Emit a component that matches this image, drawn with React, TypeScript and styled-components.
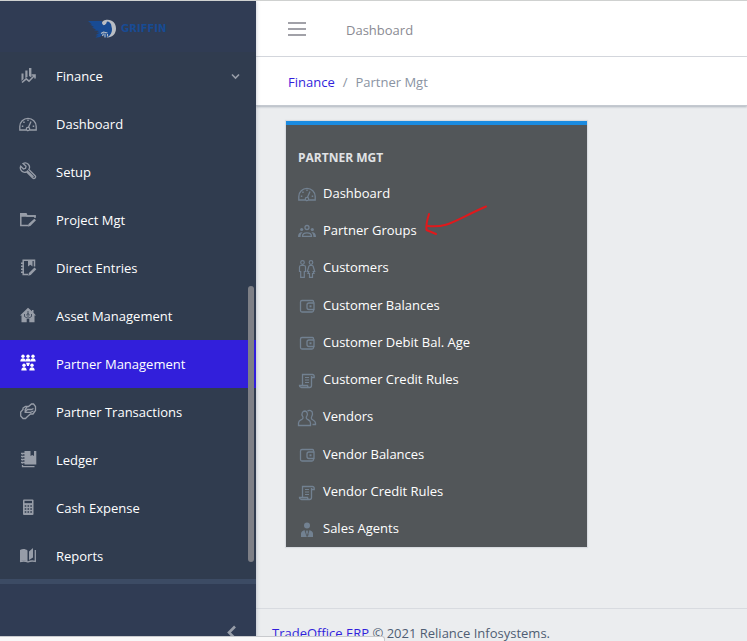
import React from "react";
import styled, { createGlobalStyle } from "styled-components";

const Global = createGlobalStyle`
  *, *::before, *::after { box-sizing: border-box; }
  body {
    margin: 0;
    background: #ebedef;
    color: #4f5d73;
    font-family: "Open Sans", "Noto Sans", sans-serif;
    font-size: 13px;
    line-height: 20px;
  }
  a { text-decoration: none; }
  ul, ol { list-style: none; margin: 0; padding: 0; }
`;

/* ---------- icons ---------- */

const IconSvg = styled.svg`
  flex: none;
  width: 20px;
  height: 20px;
  fill: none;
  stroke: currentColor;
  stroke-width: 1.3;
  .solid { fill: currentColor; stroke: none; }
  .thin { stroke-width: 1; }
`;

const wallet = (
  <>
    <path d="M16.500 6.500V5.500a1 1 0 0 0-1-1H5a1.500 1.500 0 0 0-1.500 1.500V14.500a1.500 1.500 0 0 0 1.500 1.500H15a1.500 1.500 0 0 0 1.500-1.500V13.500" />
    <path d="M17 7H12a2 2 0 0 0-2 2v2.500a2 2 0 0 0 2 2H17z" />
    <path className="solid" d="M12.500 9.300h2v2h-2z" />
  </>
);

const scroll = (
  <>
    <path d="M5.500 14V3.500H15.500a1.700 1.700 0 0 1 1.700 1.700V6.500H14.500M14.500 5V14.500a2 2 0 0 1-2 2H4.500a2 2 0 0 1-2-2H10.500a2 2 0 0 0 2 2" />
    <path className="thin" d="M8 6.500h4M8 9h4M8 11.500h4" />
  </>
);

const icons: Record<string, React.ReactNode> = {
  finance: (
    <>
      <path className="solid" d="M3.500 7.500h2V13l-2 2zM7.300 4.500h2.200V11l-2.200 1zM11 2h2.400v9.500L11 10z" />
      <path strokeWidth="1.600" d="M4 16.500 8.200 12.800 11 15.200 16.500 9.500M13.500 9h3.500v3.500" />
    </>
  ),
  gauge: (
    <>
      <path d="M8 16H1.800V12.500a8.200 8.200 0 0 1 16.400 0V16H12" />
      <circle cx="10" cy="15" r="1.700" />
      <path d="M10.500 13.300 13 7.500" />
      <path className="solid" d="M9.300 5.500h1.400v1.600H9.300zM5.200 7.500h1.500V9H5.200zM3.800 11.500h1.500V13H3.800zM14.700 11.500h1.500V13h-1.500z" />
    </>
  ),
  wrench: (
    <path d="M5 1.500 8 4.300 7.500 6.300 5.500 7 2.700 4.200a4.300 4.300 0 0 0 5.800 5.600l6.200 6.300a1.700 1.700 0 0 0 2.400-2.400l-6.300-6.200A4.300 4.300 0 0 0 5 1.500zM9 8.500l6.500 6.500" />
  ),
  folder: (
    <>
      <path strokeWidth="1.500" d="M10.500 15.500H2.800V4.500H8l1 1.500H17V8" />
      <path className="solid" d="M2 3h6.500L9.500 5.200H17.800V6.700H2zM16.300 8.700l1.700 1.600-5.700 5.700-2.300.6.500-2.500z" />
    </>
  ),
  notebook: (
    <>
      <path strokeWidth="1.500" d="M10 16.500H5.200V2.300H16.500V8.500" />
      <path className="solid" d="M10 2.500h4.500v6L12.300 6.800 10 8.500zM16.500 9.500l1.800 1.800-5.600 5.700-2.500.8.700-2.700zM3 4.500h3V6H3zM3 7.500h3V9H3zM3 10.500h3V12H3zM3 13.500h3V15H3z" />
    </>
  ),
  house: (
    <>
      <path className="solid" d="M10 1.800 14 5.300V4h1.500v2.700L18 9.500h-1.500v6.700h-5.200V13H8.700v3.200H3.500V9.500H2z" />
      <path
        d="M10 5v8M10 7.500 8.200 9.200M10 7.500l1.800 1.700M6.500 8v2.500L9 12M13.500 8v2.500L11 12"
        stroke="#303c4f"
        strokeWidth="0.800"
      />
    </>
  ),
  people: (
    <g className="solid">
      {[[5, 1.5], [10, 1.5], [15, 1.5], [6, 10.5], [14, 10.5]].map(([x, y]) => (
        <g key={`${x}-${y}`}>
          <circle cx={x} cy={y + 0.8} r="1.700" />
          <path d={`M${x - 2.7} ${y + 6}c0-4.200 5.400-4.200 5.400 0z`} />
        </g>
      ))}
      <path d="M8 8.800h4L10.800 12H9.200z" />
    </g>
  ),
  exchange: (
    <>
      <path d="M7.500 4.500h3L13.500 2h2L17.500 4.500v4l-2.500 3.500h-2.500l-3 2.500-2 2H5L2.700 14V10L5 7.500V6z" />
      <path d="M15.500 6.500 13.500 7.500H9.500L7.500 9.500M9 5 7.200 7.500V10.300H12.500L15.500 9" />
    </>
  ),
  ledger: (
    <>
      <path className="solid" d="M6.500 1H12.500v5l1.700-1L16 6V1h2.300V14.500H6.500z" />
      <path d="M4.500 15v1.700H16.500M3 3.500h4M3 6.500h4M3 9.500h4M3 12.500h4" />
      <path className="thin" d="M4.500 3v12" strokeDasharray="1.500 1.500" />
    </>
  ),
  calculator: (
    <>
      <rect className="solid" x="5" y="1.500" width="10.500" height="15.500" rx="1" />
      <path d="M6.500 4h7.500" stroke="#303c4f" strokeWidth="2.300" />
      <path
        d="M6.700 8h7.500M6.700 11h7.500M6.700 14h7.500"
        stroke="#303c4f"
        strokeWidth="1.400"
        strokeDasharray="1.600 1.200"
      />
    </>
  ),
  book: (
    <>
      <path className="solid" d="M2 4C5 2.500 7.500 3 9.500 4.500v11C7 14.300 4.500 14.300 2 15.500zM11 5.500 15 2v9.500l-4 2.500z" />
      <path d="M2 15.500c3-.8 5.500-.8 8 .5 2.500-1.300 4.500-1.300 7.300-.5V4" />
    </>
  ),
  group: (
    <>
      <circle cx="10" cy="6.500" r="2" />
      <path d="M5.500 15.300c0-4.500 9-4.500 9 0z" />
      <circle className="solid" cx="4.700" cy="8.500" r="1.600" />
      <circle className="solid" cx="15.300" cy="8.500" r="1.600" />
      <path className="solid" d="M1 15.900c0-3.500 1.500-5 4.600-4.700-1.500 1.400-2 2.700-2 4.700zM19 15.900c0-3.500-1.500-5-4.600-4.700 1.500 1.400 2 2.700 2 4.700z" />
    </>
  ),
  couple: (
    <g strokeWidth="1.200">
      <circle cx="5.500" cy="3.500" r="1.800" />
      <circle cx="14" cy="3.500" r="1.800" />
      <path d="M4 6.500h3q1.500 0 1.500 1.500v4.500H7.300V18.300H3.700V12.500H2.500V8Q2.500 6.500 4 6.500zM13 6.500h2q1 0 1.200 1l1.500 5h-1.500l.8 2h-1.500v3.800h-3V14.500H11l.8-2h-1.500l1.500-5q.2-1 1.200-1z" />
    </g>
  ),
  wallet,
  scroll,
  users: (
    <>
      <path d="M8 3a3 3.300 0 0 0-2.500 5.200c.8 1 .7 2.300-.5 3C3 12.300 1.500 12.800 1.500 15v2.500h12V15c0-2.200-1.500-2.700-3.200-3.800-1.200-.7-1.300-2-.5-3A3 3.300 0 0 0 8 3z" />
      <path d="M10.500 3.200C12 1.500 15.800 2.500 15.500 6c0 2-1.800 3-1 4.700.5 1.300 4 1.800 4 4.300v1.500h-3" />
    </>
  ),
  agent: (
    <>
      <circle className="solid" cx="10" cy="5.500" r="3" />
      <path className="solid" d="M4 17v-3.500C4 11.500 6 10.500 8 10.300L10 17zM16 17v-3.500c0-2-2-3-4-3.200L10 17zM9.300 10.500h1.400L11.500 15 10 17l-1.500-2z" />
      <path d="m8 10.500 2 6 2-6" stroke="#525659" strokeWidth="0.800" />
    </>
  ),
};

const Icon = ({ name }: { name: string }) => (
  <IconSvg viewBox="0 0 20 20" aria-hidden="true">{icons[name]}</IconSvg>
);

/* ---------- page frame ---------- */

const Page = styled.div`
  display: grid;
  grid-template-columns: 256px minmax(0, 1fr);
  height: 100vh;
  min-height: 600px;
  border-top: 1px solid #cfd1d0;
  overflow: hidden;
`;

const Sidebar = styled.aside`
  position: relative;
  z-index: 1;
  display: flex;
  flex-direction: column;
  min-height: 0;
  background: #303c4f;
  box-shadow: 0 0 4px rgba(60, 75, 100, 0.35);
`;

const Brand = styled.a`
  display: flex;
  flex: none;
  align-items: center;
  gap: 4px;
  height: 51px;
  padding: 5px 0 0 88px;
  background: #303c54;
  color: #184b93;
  font: bold 10px/16px "DejaVu Sans", sans-serif;
`;

const NavArea = styled.nav`
  flex: 1;
  min-height: 0;
  overflow: hidden;
`;

const NavLink = styled.a<{ $active?: boolean }>`
  display: flex;
  align-items: center;
  gap: 18px;
  height: 48px;
  padding: 0 16px 0 18px;
  color: #fff;
  background: ${(p) => (p.$active ? "#321fdb" : "transparent")};
  > svg:first-child { color: ${(p) => (p.$active ? "#fff" : "#979da8")}; }
`;

const NavLabel = styled.span`
  flex: 1;
`;

const Chevron = styled.svg`
  width: 9px;
  height: 7px;
  fill: none;
  stroke: #979da8;
  stroke-width: 1.6;
`;

const ScrollThumb = styled.div`
  position: absolute;
  top: 285px;
  right: 2px;
  bottom: 79px;
  width: 6px;
  border-radius: 3px;
  background: #7d7f86;
`;

const Minimizer = styled.button`
  display: flex;
  flex: none;
  justify-content: flex-end;
  align-items: flex-end;
  height: 62px;
  padding: 0 19px 2px;
  border: 0;
  border-top: 5px solid #3c4b64;
  background: #303c54;
  color: #979da8;
`;

const Main = styled.div`
  display: flex;
  flex-direction: column;
  min-width: 0;
  min-height: 0;
`;

const TopBar = styled.header`
  display: flex;
  flex: none;
  align-items: center;
  gap: 40px;
  height: 56px;
  padding: 3px 32px 0;
  border-bottom: 1px solid #d8dbe0;
  background: #fff;
`;

const MenuButton = styled.button`
  display: flex;
  padding: 0 0 2px;
  border: 0;
  background: none;
  color: #83838c;
`;

const TopLink = styled.a`
  color: #8a8a92;
`;

const Breadcrumb = styled.nav`
  flex: none;
  height: 49px;
  padding: 15px 32px;
  border-bottom: 1px solid #c4c9d0;
  background: #fff;
  box-shadow: 0 1px 2px rgba(60, 75, 100, 0.35);
  ol { display: flex; gap: 8px; }
  a { color: #321fdb; }
  li { color: #8a93a2; }
`;

const Content = styled.main`
  flex: 1;
  min-height: 0;
  padding: 15px 30px;
`;

const Card = styled.section`
  width: 100%;
  max-width: 301px;
  border-top: 4px solid #1b8be0;
  background: #525659;
  box-shadow: 0 0 1px 1px #d8dbe0;
`;

const CardTitle = styled.h2`
  margin: 0;
  padding: 23px 12px 6px;
  color: #e0e2e5;
  font-size: 12px;
  line-height: 20px;
  font-weight: 700;
`;

const CardList = styled.ul`
  display: grid;
  grid-auto-rows: 1fr;
  height: 373px;
`;

const CardRow = styled.li`
  position: relative;
  display: flex;
`;

const CardLink = styled.a`
  display: flex;
  flex: 1;
  align-items: center;
  gap: 6px;
  padding-left: 11px;
  color: #fff;
  svg { color: #728191; margin-top: 3px; }
`;

const PenArrow = styled.svg`
  position: absolute;
  left: 137px;
  top: -7px;
  width: 68px;
  height: 34px;
  fill: none;
  stroke: #e0191c;
  stroke-width: 2;
  stroke-linecap: round;
  stroke-linejoin: round;
`;

const Footer = styled.footer`
  flex: none;
  height: 33px;
  padding: 16px 16px 0;
  border-top: 1px solid #d8dbe0;
  color: #4f5d73;
  line-height: 16px;
  white-space: nowrap;
  a { color: #321fdb; }
`;

const StatusBubble = styled.div`
  position: fixed;
  z-index: 2;
  left: 0;
  bottom: 0;
  width: 385px;
  height: 5px;
  border: solid #c8cacd;
  border-width: 1px 1px 0 0;
  border-radius: 0 3px 0 0;
  background: #f8f8f8;
`;

const navItems = [
  ["Finance", "finance"],
  ["Dashboard", "gauge"],
  ["Setup", "wrench"],
  ["Project Mgt", "folder"],
  ["Direct Entries", "notebook"],
  ["Asset Management", "house"],
  ["Partner Management", "people"],
  ["Partner Transactions", "exchange"],
  ["Ledger", "ledger"],
  ["Cash Expense", "calculator"],
  ["Reports", "book"],
];

const cardItems = [
  ["Dashboard", "gauge"],
  ["Partner Groups", "group"],
  ["Customers", "couple"],
  ["Customer Balances", "wallet"],
  ["Customer Debit Bal. Age", "wallet"],
  ["Customer Credit Rules", "scroll"],
  ["Vendors", "users"],
  ["Vendor Balances", "wallet"],
  ["Vendor Credit Rules", "scroll"],
  ["Sales Agents", "agent"],
];

const GriffinMark = () => (
  <svg width="29" height="20" viewBox="0 0 29 20" aria-hidden="true">
    <path fill="#b9bdc3" d="M17.500 1c6.500-1 10.500 3 10.500 8.500S24 19 18.500 18.500c3-1.500 5-4.500 4.500-7.500-.5-3-3-4-5-5.500L14.500 7c-1.500-3 0-5.500 3-6z" />
    <path fill="#184b93" d="M0 2h14c-.5 2 .5 3.500 2 4.500L18 5l1-2.500c2.500 0 4.500 2 4.500 5 1 3 .5 6-1.500 8.500-1.500 1.800-3 2.500-5 2.500L14 16l-2 2-4.500.8c.5-1 1.500-1.800 3-2l-3-.5 4-2.500-3-.3L11 12l-5-.8 2-.7-4-2 2-.4L2 5.500h2z" />
    <path fill="none" stroke="#b9bdc3" strokeWidth="1.100" d="M13 14.500l2.500-1.500 4 1M14.500 17l1-2.500M17 18.500v-4M19.500 17.500v-2.500M16 3.500h2" />
  </svg>
);

export default function App() {
  return (
    <>
      <Global />
      <Page>
        <Sidebar>
          <Brand href="#home"><GriffinMark />GRIFFIN</Brand>
          <NavArea aria-label="Main">
            <ul>
              {navItems.map(([label, icon]) => (
                <li key={label}>
                  <NavLink href="#nav" $active={label === "Partner Management"}>
                    <Icon name={icon} />
                    <NavLabel>{label}</NavLabel>
                    {label === "Finance" && (
                      <Chevron viewBox="0 0 9 7"><path d="m1 1.500 3.500 3.500L8 1.500" /></Chevron>
                    )}
                  </NavLink>
                </li>
              ))}
            </ul>
          </NavArea>
          <ScrollThumb />
          <Minimizer type="button" aria-label="Minimize sidebar">
            <svg width="12" height="14" viewBox="0 0 12 14" fill="none" stroke="currentColor" strokeWidth="2.600">
              <path d="M10 1.500 4 7.500l6 6" />
            </svg>
          </Minimizer>
        </Sidebar>
        <Main>
          <TopBar>
            <MenuButton type="button" aria-label="Toggle menu">
              <svg width="18" height="14" viewBox="0 0 18 14" stroke="currentColor" strokeWidth="1.500">
                <path d="M0 1h18M0 7h18M0 13h18" />
              </svg>
            </MenuButton>
            <TopLink href="#dashboard">Dashboard</TopLink>
          </TopBar>
          <Breadcrumb aria-label="Breadcrumb">
            <ol>
              <li><a href="#finance">Finance</a></li>
              <li aria-hidden="true">/</li>
              <li>Partner Mgt</li>
            </ol>
          </Breadcrumb>
          <Content>
            <Card>
              <CardTitle>PARTNER MGT</CardTitle>
              <CardList>
                {cardItems.map(([label, icon]) => (
                  <CardRow key={label}>
                    <CardLink href="#item"><Icon name={icon} />{label}</CardLink>
                    {label === "Partner Groups" && (
                      <PenArrow viewBox="0 0 68 34" aria-hidden="true">
                        <path d="M6 10C4 16 3 21 3.500 26L13 30M5 22c20 2 25-5 58-19.500" />
                      </PenArrow>
                    )}
                  </CardRow>
                ))}
              </CardList>
            </Card>
          </Content>
          <Footer><a href="#erp">TradeOffice ERP</a> © 2021 Reliance Infosystems.</Footer>
        </Main>
      </Page>
      <StatusBubble />
    </>
  );
}
